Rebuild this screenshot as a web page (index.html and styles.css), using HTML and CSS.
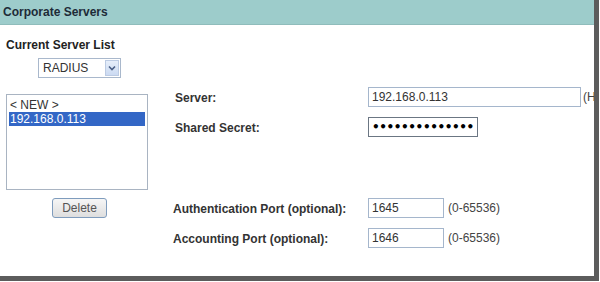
FILE: index.html
```html
<!DOCTYPE html>
<html lang="en">
  <head>
    <meta charset="UTF-8" />
    <title>Corporate Servers</title>
    <link rel="stylesheet" href="styles.css">
  </head>
  <body>
    <div class="frame">
      <div class="header">Corporate Servers</div>

      <div class="content">
        <div class="server-list">
          <div class="list-title">Current Server List</div>

          <div class="select-box">
            <span class="select-value">RADIUS</span>
            <span class="select-arrow">
              <svg width="8" height="6" viewBox="0 0 8 6">
                <path d="M1 1.5 L4 4.5 L7 1.5" fill="none" stroke="#4a5f86" stroke-width="1.6" />
              </svg>
            </span>
          </div>

          <div class="listbox">
            <div class="list-item">&lt; NEW &gt;</div>
            <div class="list-item selected">192.168.0.113</div>
          </div>

          <button class="delete-btn">Delete</button>
        </div>

        <div class="server-form">
          <div class="field-group">
            <label class="field-label indent">Server:</label>
            <input type="text" class="text-input wide" value="192.168.0.113" />
            <span class="field-note tight">(Hostname or IP)</span>

            <label class="field-label indent">Shared Secret:</label>
            <input type="password" class="text-input secret" value="abcdefghijklmn" />
            <span></span>
          </div>

          <div class="field-group ports">
            <label class="field-label">Authentication Port (optional):</label>
            <input type="text" class="text-input port" value="1645" />
            <span class="field-note">(0-65536)</span>

            <label class="field-label">Accounting Port (optional):</label>
            <input type="text" class="text-input port" value="1646" />
            <span class="field-note">(0-65536)</span>
          </div>
        </div>
      </div>
    </div>
  </body>
</html>
```

FILE: styles.css
```css
body {
  margin: 0;
  font-family: "Liberation Sans", Arial, sans-serif;
  font-size: 12px;
  color: #333;
  background: #fff;
}
.frame {
  width: 594px;
  height: 276px;
  overflow: hidden;
  background: #fff;
  border-right: 5px solid #5c5c5c;
  border-bottom: 5px solid #5c5c5c;
}
.header {
  height: 24px;
  line-height: 24px;
  padding-left: 3px;
  background-color: #9dcccb;
  border-bottom: 1px solid #8fbcbb;
  font-weight: bold;
  color: #1d2b38;
}
.content {
  display: flex;
}
.server-list {
  flex: 0 0 167px;
  padding: 13px 0 0 6px;
  box-sizing: border-box;
  display: flex;
  flex-direction: column;
  align-items: flex-start;
}
.list-title {
  font-weight: bold;
  line-height: 14px;
  color: #222;
}
.select-box {
  display: flex;
  align-items: center;
  justify-content: space-between;
  width: 83px;
  height: 20px;
  box-sizing: border-box;
  margin: 6px 0 0 32px;
  padding: 0 1px 0 4px;
  border: 1px solid #a9b8cc;
  background: #fff;
  color: #333;
}
.select-arrow {
  display: flex;
  align-items: center;
  justify-content: center;
  width: 14px;
  height: 16px;
  background: linear-gradient(#e6eefa, #cbdaf2);
  border: 1px solid #bccbe3;
  box-sizing: border-box;
}
.listbox {
  width: 142px;
  height: 96px;
  box-sizing: border-box;
  margin-top: 16px;
  padding: 3px 2px;
  border: 1px solid #a9b4c2;
  background: #fff;
}
.list-item {
  line-height: 14px;
  padding-left: 1px;
  color: #333;
}
.list-item.selected {
  background-color: #3367c6;
  color: #fff;
}
.delete-btn {
  margin: 8px 0 0 46px;
  width: 55px;
  height: 20px;
  padding: 0;
  font-family: "Liberation Sans", Arial, sans-serif;
  font-size: 12px;
  color: #555;
  background: linear-gradient(#f6f6f6, #dedede);
  border: 1px solid #7f9cbd;
  border-radius: 3px;
}
.server-form {
  flex: 0 0 auto;
  padding: 62px 0 0 6px;
}
.field-group {
  display: grid;
  grid-template-columns: 195px max-content max-content;
  justify-content: start;
  grid-auto-rows: 20px;
  row-gap: 10px;
  align-items: center;
}
.field-group.ports {
  margin-top: 61px;
}
.field-label {
  font-weight: bold;
  color: #333;
  padding-top: 2px;
}
.field-label.indent {
  padding-left: 2px;
}
.text-input {
  height: 20px;
  box-sizing: border-box;
  padding: 0 3px;
  border: 1px solid #a5b6cc;
  font-family: "Liberation Sans", Arial, sans-serif;
  font-size: 12px;
  color: #333;
  outline: none;
}
.text-input.wide {
  width: 213px;
}
.text-input.secret {
  width: 110px;
  border-color: #6b7683;
  font-family: "DejaVu Sans", sans-serif;
  font-weight: bold;
  letter-spacing: -0.4px;
  color: #000;
}
.text-input.port {
  width: 76px;
}
.field-note {
  margin-left: 4px;
  color: #444;
  white-space: nowrap;
}
.field-note.tight {
  margin-left: 2px;
}
```
